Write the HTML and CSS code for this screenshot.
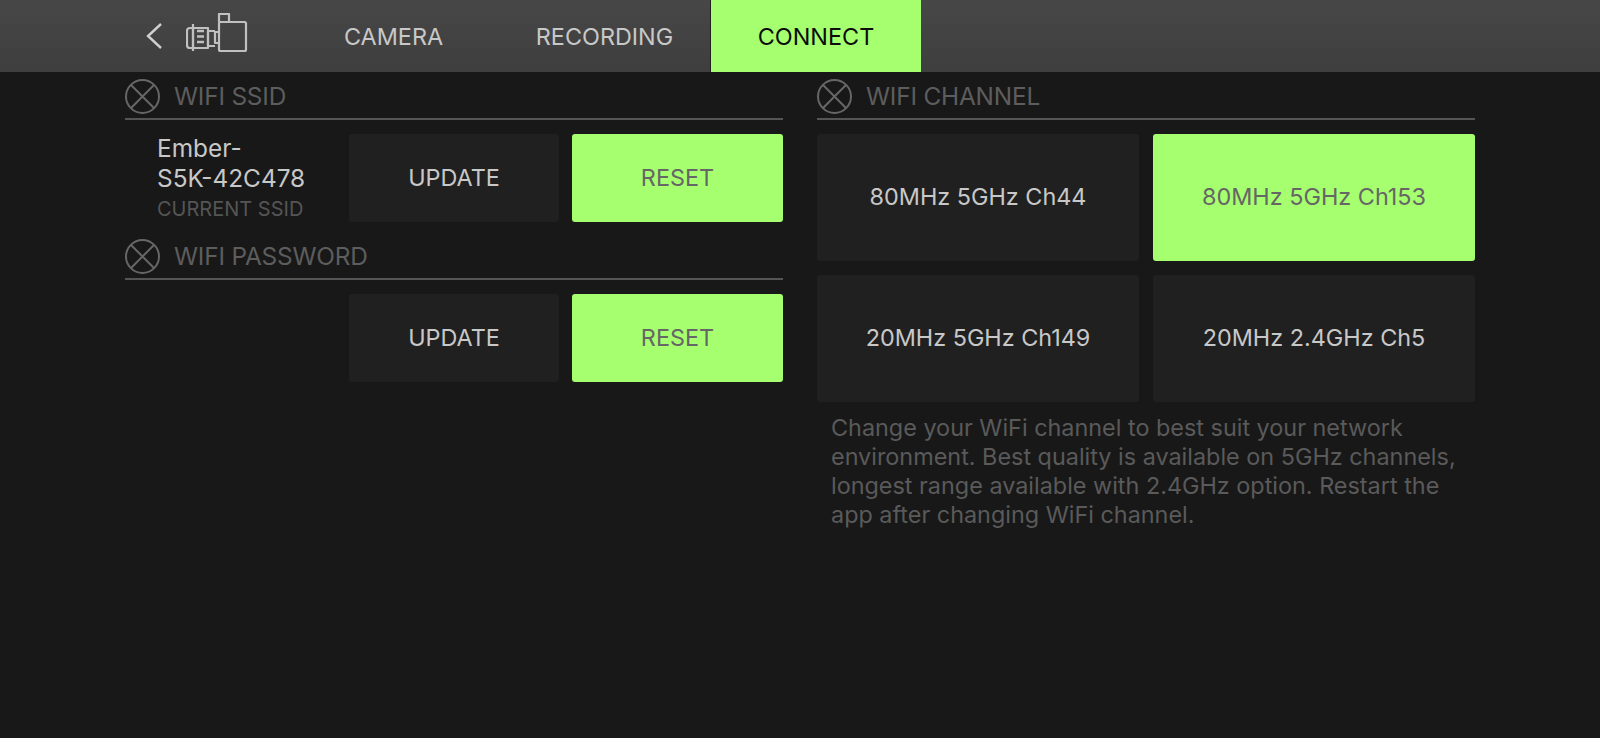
FILE: index.html
```html
<!DOCTYPE html>
<html lang="en">

<head>
  <meta charset="UTF-8">
  <meta name="viewport" content="width=device-width, initial-scale=1.0">
  <title>Connect</title>
  <link rel="stylesheet" href="styles.css">
</head>

<body>
  <header class="topbar">
    <a class="back" href="javascript:;">
      <svg width="18" height="28" viewBox="0 0 18 28" fill="none" stroke="#d0d0d0" stroke-width="2.4">
        <path d="M16 2 L3 14 L16 26" />
      </svg>
    </a>
    <svg class="camera" width="62" height="40" viewBox="0 0 62 40" fill="none" stroke="#c0c0c0" stroke-width="2.2"
      stroke-linejoin="round">
      <rect x="33" y="9" width="27" height="29" rx="1.5" />
      <path d="M33 9 V1 H43 V9" />
      <path d="M33 19 H29 V30 H33" />
      <path d="M29 18 H22 V33 H29" />
      <path d="M22 15 H7 V35 H22 Z" />
      <path d="M7 11 V38" />
      <path d="M7 15 H4 Q1 15 1 18 V32 Q1 35 4 35 H7" />
      <path d="M11 18 H18 M11 23.500 H18 M11 29 H18" stroke-width="2.600" />
    </svg>
    <nav class="tabs">
      <a class="tab" href="javascript:;">CAMERA</a>
      <a class="tab" href="javascript:;">RECORDING</a>
      <a class="tab selected" href="javascript:;">CONNECT</a>
    </nav>
  </header>

  <main class="content">
    <section class="column">
      <div class="heading">
        <svg class="cross" width="35" height="35" viewBox="0 0 35 35" fill="none" stroke="#666" stroke-width="2">
          <circle cx="17.5" cy="17.5" r="16.5" />
          <path d="M5.800 5.800 L29.200 29.200 M29.200 5.800 L5.800 29.200" />
        </svg>
        <h2>WIFI SSID</h2>
      </div>
      <div class="row">
        <div class="current">
          <p class="ssid">Ember-<br>S5K-42C478</p>
          <p class="ssid_label">CURRENT SSID</p>
        </div>
        <button class="btn">UPDATE</button>
        <button class="btn active">RESET</button>
      </div>

      <div class="heading">
        <svg class="cross" width="35" height="35" viewBox="0 0 35 35" fill="none" stroke="#666" stroke-width="2">
          <circle cx="17.5" cy="17.5" r="16.5" />
          <path d="M5.800 5.800 L29.200 29.200 M29.200 5.800 L5.800 29.200" />
        </svg>
        <h2>WIFI PASSWORD</h2>
      </div>
      <div class="row">
        <div class="current"></div>
        <button class="btn">UPDATE</button>
        <button class="btn active">RESET</button>
      </div>
    </section>

    <section class="column">
      <div class="heading">
        <svg class="cross" width="35" height="35" viewBox="0 0 35 35" fill="none" stroke="#666" stroke-width="2">
          <circle cx="17.5" cy="17.5" r="16.5" />
          <path d="M5.800 5.800 L29.200 29.200 M29.200 5.800 L5.800 29.200" />
        </svg>
        <h2>WIFI CHANNEL</h2>
      </div>
      <div class="channels">
        <button class="btn">80MHz 5GHz Ch44</button>
        <button class="btn active">80MHz 5GHz Ch153</button>
        <button class="btn">20MHz 5GHz Ch149</button>
        <button class="btn">20MHz 2.4GHz Ch5</button>
      </div>
      <p class="note">Change your WiFi channel to best suit your network environment. Best quality is available on 5GHz
        channels, longest range available with 2.4GHz option. Restart the app after changing WiFi channel.</p>
    </section>
  </main>
</body>

</html>
```

FILE: styles.css
```css
* {
  margin: 0;
  padding: 0;
  box-sizing: border-box;
}

html,
body {
  height: 738px;
  overflow: hidden;
}

body {
  background-color: #181818;
  font-family: Inter, "Liberation Sans", sans-serif;
}

a {
  text-decoration: none;
}

.topbar {
  display: flex;
  align-items: center;
  height: 72px;
  padding-left: 145px;
  background: linear-gradient(#474747, #3e3e3e);
}

.back {
  display: flex;
  width: 18px;
  margin-right: 23px;
}

.camera {
  margin-top: -6px;
}

.tabs {
  display: grid;
  grid-template-columns: repeat(3, 211px);
  align-self: stretch;
  margin-left: 40px;
}

.tab {
  display: flex;
  align-items: center;
  justify-content: center;
  color: #c8c8c8;
  font-size: 23.4px;
}

.selected {
  color: #0c0c0c;
  background-color: #a6ff6e;
  border-left: 1px solid #222;
}

.content {
  display: flex;
  gap: 34px;
  padding: 7px 125px 0;
}

.column {
  width: 658px;
}

.heading {
  display: flex;
  align-items: center;
  height: 41px;
  border-bottom: 2px solid #555;
  padding-bottom: 5px;
}

.heading h2 {
  margin-left: 14px;
  color: #5d5d5d;
  font-size: 24.4px;
  font-weight: 400;
  letter-spacing: -0.2px;
}

.row {
  display: grid;
  grid-template-columns: 211px 210px 211px;
  gap: 13px;
  height: 88px;
  margin: 14px 0 17px;
}

.current {
  padding-left: 32px;
}

.ssid {
  margin-top: -1px;
  color: #c8c8c8;
  font-size: 24.4px;
  line-height: 30px;
}

.ssid_label {
  margin-top: 3px;
  color: #555;
  font-size: 20px;
  line-height: 26px;
}

.btn {
  padding-bottom: 2px;
  border: none;
  border-radius: 3px;
  background-color: #202020;
  color: #c8c8c8;
  font-family: inherit;
  font-size: 23.4px;
}

.btn.active {
  background-color: #a6ff6e;
  color: #666;
}

.channels {
  display: grid;
  grid-template-columns: 322px 322px;
  grid-auto-rows: 127px;
  gap: 14px;
  margin-top: 14px;
}

.note {
  margin-top: 11px;
  padding-left: 14px;
  color: #5a5a5a;
  font-size: 23.4px;
  line-height: 29px;
}
```
